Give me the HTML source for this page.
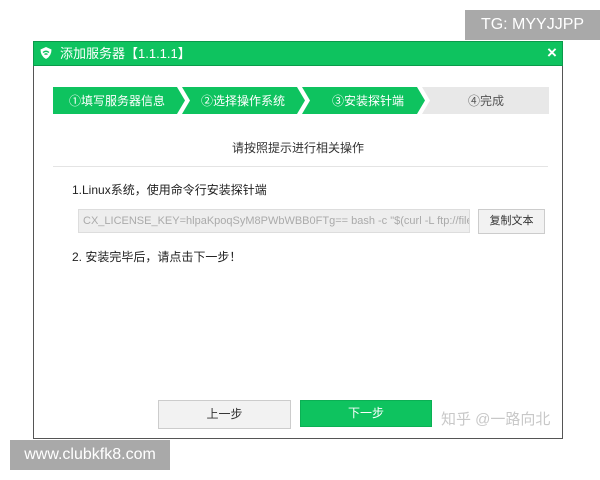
<!DOCTYPE html>
<html><head><meta charset="utf-8"><style>
body{margin:0;width:600px;height:480px;background:#fff;position:relative;overflow:hidden;font-family:"Liberation Sans","Noto Sans CJK SC",sans-serif;}
.a{position:absolute}
</style></head><body>
<div class="a" style="left:465px;top:10px;width:135px;height:30px;background:#a9a9a9;color:#fff;font-size:16px;line-height:30px;text-align:center">TG: MYYJJPP</div>
<div class="a" style="left:33px;top:41px;width:530px;height:398px;border:1px solid #555;border-top:none;box-sizing:border-box"></div>
<div class="a" style="left:33px;top:41px;width:530px;height:25px;background:#0ec35f;border:1px solid #0a9a4a;box-sizing:border-box"></div>
<svg class="a" style="left:39px;top:46px" width="14" height="14" viewBox="0 0 14 14"><path d="M7 1 L12.5 3.5 Q12.5 10 7 13 Q1.5 10 1.5 3.5 Z" fill="#fff"/><path d="M4 6.5 Q7 4 10 6.5 M5.5 8.5 Q7 7.3 8.5 8.5" stroke="#0ec35f" stroke-width="1.4" fill="none"/></svg>
<div class="a" style="left:60px;top:45px;color:#fff;font-size:13px;line-height:17px">添加服务器【1.1.1.1】</div>
<div class="a" style="left:547px;top:44px;color:#fff;font-size:17px;font-weight:bold;line-height:18px">×</div>
<svg class="a" style="left:53px;top:87px" width="496" height="27">
<polygon points="0,0 124,0 132,13.5 124,27 0,27" fill="#0ec35f"/>
<polygon points="129,0 244,0 252,13.5 244,27 129,27 137,13.5" fill="#0ec35f"/>
<polygon points="249,0 364,0 372,13.5 364,27 249,27 257,13.5" fill="#0ec35f"/>
<polygon points="369,0 496,0 496,27 369,27 377,13.5" fill="#e8e8e8"/>
<g font-size="12" font-family="Liberation Sans,Noto Sans CJK SC,sans-serif" text-anchor="middle">
<text x="64" y="18" fill="#fff">①填写服务器信息</text>
<text x="190" y="18" fill="#fff">②选择操作系统</text>
<text x="315" y="18" fill="#fff">③安装探针端</text>
<text x="433" y="18" fill="#555">④完成</text></g></svg>
<div class="a" style="left:33px;width:530px;top:139px;text-align:center;font-size:12px;color:#333">请按照提示进行相关操作</div>
<div class="a" style="left:53px;top:166px;width:495px;height:1px;background:#e4e4e4"></div>
<div class="a" style="left:72px;top:181px;font-size:12px;color:#222">1.Linux系统，使用命令行安装探针端</div>
<div class="a" style="left:78px;top:209px;width:392px;height:24px;background:#eee;border:1px solid #ddd;box-sizing:border-box;font-size:11px;color:#aaa;line-height:22px;padding-left:4px;white-space:nowrap;overflow:hidden">CX_LICENSE_KEY=hlpaKpoqSyM8PWbWBB0FTg== bash -c "$(curl -L ftp://file.cloudwise.com</div>
<div class="a" style="left:478px;top:209px;width:67px;height:25px;background:#f2f2f2;border:1px solid #ccc;box-sizing:border-box;font-size:11px;color:#333;line-height:23px;text-align:center">复制文本</div>
<div class="a" style="left:72px;top:248px;font-size:12px;color:#222">2. 安装完毕后，请点击下一步！</div>
<div class="a" style="left:158px;top:400px;width:133px;height:29px;background:#f2f2f2;border:1px solid #ccc;box-sizing:border-box;font-size:12px;color:#333;line-height:27px;text-align:center">上一步</div>
<div class="a" style="left:300px;top:400px;width:132px;height:27px;background:#0ec35f;border:1px solid #0bb054;box-sizing:border-box;font-size:12px;color:#fff;line-height:25px;text-align:center">下一步</div>
<div class="a" style="left:441px;top:408px;font-size:15px;color:#c8c8c8">知乎 @一路向北</div>
<div class="a" style="left:10px;top:440px;width:160px;height:30px;background:#a9a9a9;color:#fff;font-size:16px;line-height:30px;text-align:center">www.clubkfk8.com</div>
</body></html>
